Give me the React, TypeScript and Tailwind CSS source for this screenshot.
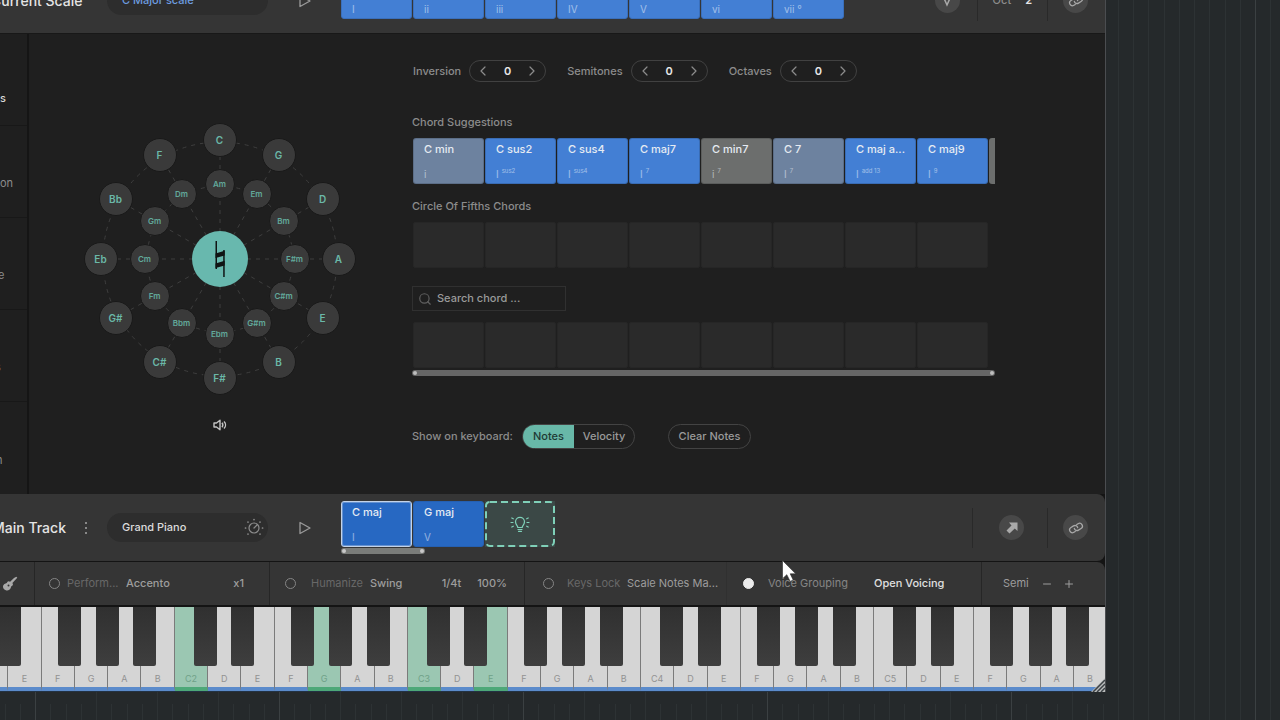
import { ChevronLeft, ChevronRight, Minus, Plus, Search } from "lucide-react";
import type { CSSProperties, FC, ReactNode } from "react";

type Chord = {
	name: string;
	degree: string;
	sup?: string;
	tone: string;
};

const BLUE = "bg-[#437fd4]";
const SLATE = "bg-[#6d829f]";
const GREY = "bg-[#6c6e6d]";

const SUGGESTIONS: Chord[] = [
	{ name: "C min", degree: "i", tone: SLATE },
	{ name: "C sus2", degree: "I", sup: "sus2", tone: BLUE },
	{ name: "C sus4", degree: "I", sup: "sus4", tone: BLUE },
	{ name: "C maj7", degree: "I", sup: "7", tone: BLUE },
	{ name: "C min7", degree: "i", sup: "7", tone: GREY },
	{ name: "C 7", degree: "I", sup: "7", tone: SLATE },
	{ name: "C maj a...", degree: "I", sup: "add 13", tone: BLUE },
	{ name: "C maj9", degree: "I", sup: "9", tone: BLUE },
];

const SCALE_DEGREES = ["I", "ii", "iii", "IV", "V", "vi", "vii °"];
const MAJORS = ["C", "G", "D", "A", "E", "B", "F#", "C#", "G#", "Eb", "Bb", "F"];
const MINORS = ["Am", "Em", "Bm", "F#m", "C#m", "G#m", "Ebm", "Bbm", "Fm", "Cm", "Gm", "Dm"];

const CENTER = 136;
const OUTER = 119;
const INNER = 75;

const polar = (index: number, radius: number) => {
	const angle = (index * Math.PI) / 6;
	return {
		x: Math.floor(CENTER + Math.sin(angle) * radius),
		y: Math.floor(CENTER - Math.cos(angle) * radius),
	};
};

const place = (index: number, radius: number): CSSProperties => {
	const { x, y } = polar(index, radius);
	return { left: x, top: y };
};

const CircleOfFifths: FC = () => (
	<div className="relative h-[272px] w-[272px]">
		<svg className="h-full w-full" viewBox="0 0 272 272" fill="none" stroke="#3e3e3e" strokeDasharray="4 5">
			<circle cx={CENTER} cy={CENTER} r={OUTER - 2} />
			<circle cx={CENTER} cy={CENTER} r={INNER - 2} />
			{MAJORS.map((name, i) => {
				const end = polar(i, OUTER);
				return <path key={name} d={`M${CENTER} ${CENTER}L${end.x} ${end.y}`} />;
			})}
		</svg>
		{MAJORS.map((name, i) => (
			<button
				key={name}
				type="button"
				style={place(i, OUTER)}
				className="absolute h-[34px] w-[34px] -translate-x-1/2 -translate-y-1/2 rounded-full border border-[#191919] bg-[#3a3a3a] text-[10px] font-semibold text-[#6bb8a8]"
			>
				{name}
			</button>
		))}
		{MINORS.map((name, i) => (
			<button
				key={name}
				type="button"
				style={place(i, INNER)}
				className="absolute h-[30px] w-[30px] -translate-x-1/2 -translate-y-1/2 rounded-full border border-[#191919] bg-[#3a3a3a] text-[8px] font-semibold text-[#62a99b]"
			>
				{name}
			</button>
		))}
		<button
			type="button"
			aria-label="Natural"
			className="absolute top-1/2 left-1/2 flex h-[56px] w-[56px] -translate-x-1/2 -translate-y-1/2 items-center justify-center rounded-full bg-[#68b8ae]"
		>
			<svg width="12" height="38" viewBox="0 0 12 38" fill="#101414">
				<path d="M1.500 1h1.500v28H1.500zM9.200 10h1.500v27H9.200z" />
				<path d="M1.500 13.500l9.200-2.700v4.600l-9.200 2.700zM1.500 23.500l9.200-2.700v4.600l-9.200 2.700z" />
			</svg>
		</button>
	</div>
);

const Stepper: FC<{ label: string }> = ({ label }) => (
	<div className="flex items-center gap-2">
		<span className="text-[11px] font-medium text-[#8c8c8c]">{label}</span>
		<div className="flex h-[22px] w-[77px] items-center justify-between rounded-full border border-[#414141] px-[5px] text-[#8c8c8c]">
			<button type="button" aria-label={`${label} down`}>
				<ChevronLeft className="h-[16px] w-[16px]" strokeWidth={1.8} />
			</button>
			<span className="text-[11px] font-semibold text-[#e8e8e8]">0</span>
			<button type="button" aria-label={`${label} up`}>
				<ChevronRight className="h-[16px] w-[16px]" strokeWidth={1.8} />
			</button>
		</div>
	</div>
);

const ChordTile: FC<{ chord: Chord; className?: string }> = ({ chord, className = "" }) => (
	<button
		type="button"
		className={`flex h-[46px] w-[71px] shrink-0 flex-col justify-between rounded-[3px] border px-[10px] pt-[3px] pb-[2px] text-left whitespace-nowrap ${chord.tone} ${className}`}
	>
		<span className="text-[11px] leading-[15px] font-medium text-[#e6ebf2]">{chord.name}</span>
		<span className="flex gap-[3px] text-[10px] leading-[14px] text-white/50">
			{chord.degree}
			{chord.sup ? <span className="text-[6px] leading-[8px]">{chord.sup}</span> : null}
		</span>
	</button>
);

const EmptySlots: FC = () => (
	<div className="flex h-[46px] gap-px pl-px">
		{Array.from({ length: 8 }, (_, i) => (
			<div key={i} className="w-[71px] shrink-0 rounded-[2px] border border-[#262626] bg-[#2a2a2a]" />
		))}
	</div>
);

const PlayButton: FC = () => (
	<button type="button" aria-label="Play" className="ml-[31px]">
		<svg width="12" height="14" viewBox="0 0 12 14" fill="none" stroke="#9a9a9a" strokeLinejoin="round">
			<path d="M1 1.500v11L11 7z" strokeWidth="1.300" />
		</svg>
	</button>
);

const RoundButton: FC<{ label: string; children: ReactNode }> = ({ label, children }) => (
	<button
		type="button"
		aria-label={label}
		className="flex h-[25px] w-[25px] items-center justify-center rounded-full bg-[#484848] text-[#a9a9a9]"
	>
		{children}
	</button>
);

const Divider: FC = () => <div className="h-[40px] w-px bg-[#292929]" />;

const ChainIcon: FC = () => (
	<svg width="16" height="16" viewBox="0 0 16 16" fill="none" stroke="currentColor" strokeWidth="1.300" strokeLinecap="round">
		<g transform="rotate(-32 8 8)">
			<path d="M5.500 10.500H4a2.800 2.800 0 0 1 0-5.600h3a2.800 2.800 0 0 1 2.600 3.700" />
			<path d="M10.500 5.500H12a2.800 2.800 0 0 1 0 5.600H9a2.800 2.800 0 0 1-2.600-3.700" />
		</g>
	</svg>
);

const ScaleBar: FC = () => (
	<header className="flex h-[34px] items-end overflow-hidden border-b border-[#181818] bg-[#353535]">
		<div className="flex h-[65px] flex-1 shrink-0 items-center">
			<span className="-ml-[9px] w-[116px] text-[14px] font-medium whitespace-nowrap text-[#e4e4e4]">Current Scale</span>
			<button type="button" className="h-[29px] w-[161px] rounded-full bg-[#2d2d2d] pl-[15px] text-left text-[11px] font-medium text-[#6d9de0]">
				C Major scale
			</button>
			<PlayButton />
			<div className="mb-[9px] ml-[30px] flex gap-px">
				{SCALE_DEGREES.map((degree) => (
					<ChordTile key={degree} chord={{ name: "", degree, tone: BLUE }} className="border-[#3a6fbb]" />
				))}
			</div>
			<div className="ml-auto flex items-center pr-[17px]">
				<RoundButton label="Direction">
					<svg width="10" height="12" viewBox="0 0 10 12" fill="none" stroke="currentColor" strokeWidth="1.500">
						<path d="M1 1l4 9 4-9" />
					</svg>
				</RoundButton>
				<div className="ml-[17px]">
					<Divider />
				</div>
				<span className="ml-[15px] text-[11px] font-medium text-[#8c8c8c]">Oct</span>
				<span className="mr-[15px] ml-[14px] text-[11px] font-semibold text-[#e4e4e4]">2</span>
				<Divider />
				<div className="ml-[15px]">
					<RoundButton label="Link scale">
						<ChainIcon />
					</RoundButton>
				</div>
			</div>
		</div>
	</header>
);

const SIDEBAR = [
	{ label: "s", className: "pb-[19px] text-[#d8d8d8] font-medium" },
	{ label: "on", className: "pb-[26px] text-[#8c8c8c]" },
	{ label: "e", className: "pb-[26px] text-[#8c8c8c] -ml-[2px]" },
	{ label: "s", className: "pb-[26px] text-[#8c8c8c] -ml-[5px]" },
	{ label: "n", className: "pb-[26px] text-[#8c8c8c] -ml-[4px]" },
];

const Sidebar: FC = () => (
	<nav className="w-[29px] shrink-0 overflow-hidden border-r-2 border-[#151515]">
		{SIDEBAR.map((item, i) => (
			<button
				key={i}
				type="button"
				className="flex h-[92px] w-full items-end border-b border-[#181818] text-[11px] leading-[16px] last:border-b-0"
			>
				<span className={item.className}>{item.label}</span>
			</button>
		))}
	</nav>
);

const ChordPanel: FC = () => (
	<section className="min-w-0 flex-1 pt-[26px]">
		<div className="flex gap-[21px] pl-px">
			<Stepper label="Inversion" />
			<Stepper label="Semitones" />
			<Stepper label="Octaves" />
		</div>

		<h2 className="mt-[32px] text-[11px] leading-[16px] font-medium text-[#8c8c8c]">Chord Suggestions</h2>
		<div className="mt-[8px] flex w-[583px] gap-px overflow-hidden pl-px">
			{SUGGESTIONS.map((chord) => (
				<ChordTile key={chord.name} chord={chord} className="border-black/15" />
			))}
			<div className="h-[46px] w-[71px] shrink-0 rounded-[3px] bg-[#6c6e6d]" />
		</div>

		<h2 className="mt-[14px] mb-[8px] text-[11px] leading-[16px] font-medium text-[#8c8c8c]">Circle Of Fifths Chords</h2>
		<EmptySlots />

		<label className="mt-[18px] mb-[11px] flex h-[25px] w-[154px] items-center gap-[5px] border border-[#303030] px-[5px]">
			<Search className="h-[14px] w-[14px] shrink-0 text-[#606060]" />
			<input
				type="text"
				aria-label="Search chord"
				placeholder="Search chord ..."
				className="w-full min-w-0 bg-transparent text-[11px] font-medium outline-none placeholder:text-[#9a9a9a]"
			/>
		</label>
		<EmptySlots />
		<div className="mt-[2px] flex h-[6px] w-[583px] items-center justify-between rounded-full bg-[#666666] px-px">
			<span className="h-[4px] w-[4px] rounded-full bg-[#bdbdbd]" />
			<span className="h-[4px] w-[4px] rounded-full bg-[#bdbdbd]" />
		</div>

		<div className="mt-[48px] flex h-[25px] items-center text-[11px] font-medium">
			<span className="w-[110px] text-[#8c8c8c]">Show on keyboard:</span>
			<div className="flex h-full overflow-hidden rounded-full border border-[#434343] text-[#9a9a9a]">
				<button type="button" className="w-[51px] bg-[#68b8a8] text-[#1f3a35]">
					Notes
				</button>
				<button type="button" className="w-[60px]">
					Velocity
				</button>
			</div>
			<button type="button" className="ml-[33px] h-full w-[83px] rounded-full border border-[#434343] text-[#9a9a9a]">
				Clear Notes
			</button>
		</div>
	</section>
);

const DialIcon: FC = () => (
	<svg width="20" height="20" viewBox="0 0 20 20" fill="none" stroke="#8c8c8c" strokeLinecap="round">
		<circle cx="10" cy="10" r="5" strokeWidth="1.200" />
		<path d="M10 10l3-3" strokeWidth="1.200" />
		<path d="M10 1.500v.1M4 4v.1M16 4v.1M1.500 10h.1M18.500 10h.1M4 16v.1M16 16v.1" strokeWidth="1.700" />
	</svg>
);

const BulbIcon: FC = () => (
	<svg width="20" height="18" viewBox="0 0 20 18" fill="none" stroke="#7fd0b8" strokeWidth="1.200" strokeLinecap="round">
		<path d="M7.800 12.500c0-1.800-2.300-2.600-2.300-5.700a4.500 4.500 0 0 1 9 0c0 3.100-2.300 3.900-2.300 5.700z" />
		<path d="M8 14.500h4M8.500 16.300h3M1 7.500h2M17 7.500h2M1.800 3l1.500.8M18.200 3l-1.500.8M1.800 12l1.500-.8M18.200 12l-1.500-.8" />
	</svg>
);

const TrackBar: FC = () => (
	<div className="flex h-[67px] items-center rounded-r-[8px] bg-[#353535]">
		<span className="-ml-[8px] w-[88px] text-[14px] font-medium whitespace-nowrap text-[#e4e4e4]">Main Track</span>
		<button type="button" aria-label="Track menu" className="flex w-[12px] flex-col items-center gap-[3px]">
			<span className="h-[2px] w-[2px] rounded-full bg-[#a5a5a5]" />
			<span className="h-[2px] w-[2px] rounded-full bg-[#a5a5a5]" />
			<span className="h-[2px] w-[2px] rounded-full bg-[#a5a5a5]" />
		</button>
		<button
			type="button"
			className="ml-[15px] flex h-[29px] w-[161px] items-center justify-between rounded-full bg-[#2d2d2d] pr-[4px] pl-[15px] text-[11px] font-medium text-[#dcdcdc]"
		>
			Grand Piano
			<DialIcon />
		</button>
		<PlayButton />
		<div className="ml-[30px] flex flex-col gap-px">
			<div className="flex gap-px">
				<ChordTile chord={{ name: "C maj", degree: "I", tone: "bg-[#2768c2]" }} className="border-[#c3d3e8] outline outline-[#c3d3e8]/40 -outline-offset-2" />
				<ChordTile chord={{ name: "G maj", degree: "V", tone: "bg-[#2768c2]" }} className="border-[#2560b2]" />
				<button type="button" aria-label="Suggest chord" className="relative flex h-[46px] w-[70px] items-center justify-center bg-[#3b4846]">
					<svg className="absolute inset-0 h-full w-full" viewBox="0 0 70 46" fill="none">
						<rect x="1" y="1" width="68" height="44" rx="4" stroke="#7fd0b8" strokeWidth="2" strokeDasharray="7 4" />
					</svg>
					<BulbIcon />
				</button>
			</div>
			<div className="flex h-[6px] w-[84px] items-center justify-between rounded-full bg-[#7b7d7a] px-px">
				<span className="h-[4px] w-[4px] rounded-full bg-[#c9c9c9]" />
				<span className="h-[4px] w-[4px] rounded-full bg-[#c9c9c9]" />
			</div>
		</div>
		<div className="ml-auto flex items-center pr-[17px]">
			<Divider />
			<div className="mr-[23px] ml-[26px]">
				<RoundButton label="Drag out">
					<svg width="14" height="14" viewBox="0 0 14 14" fill="currentColor">
						<path d="M4 1.500h8.500V10L9.800 7.500 4.500 12.500 1.500 9.500 6.500 4.400z" />
					</svg>
				</RoundButton>
			</div>
			<Divider />
			<div className="ml-[15px]">
				<RoundButton label="Link track">
					<ChainIcon />
				</RoundButton>
			</div>
		</div>
	</div>
);

const Toggle: FC<{ label: string; checked?: boolean; className: string }> = ({ label, checked, className }) => (
	<label className={`flex shrink-0 items-center ${className}`}>
		<input
			type="checkbox"
			defaultChecked={checked}
			className="h-[11px] w-[11px] shrink-0 appearance-none rounded-full border border-[#858585] checked:border-[#ececec] checked:bg-[#ececec]"
		/>
		{label}
	</label>
);

const OptionBar: FC = () => (
	<div className="mt-px flex h-[43px] items-center rounded-tr-[8px] bg-[#353535] text-[11px] whitespace-nowrap text-[#9d9d9d]">
		<div className="flex h-full w-[35px] shrink-0 items-center border-r border-[#262626] pl-[2px]">
			<svg width="16" height="16" viewBox="0 0 16 16" fill="#a9a9a9">
				<path d="M14.300.8l1 1-1.200 1.300-3.700 3.900c1 1.400.6 2.400-.6 2.900-.8.400-.7 1-1.100 2.100-.7 1.900-2.900 3-4.900 2.200-1.300-.5-2.300-1.500-2.700-2.800-.5-1.900.8-3.500 2.500-3.900 1-.3 1.300-.5 1.600-1.300.5-1.200 1.700-1.400 2.900-.5l3.900-3.800z" />
				<circle cx="6.500" cy="9.500" r="1" fill="#353535" />
			</svg>
		</div>
		<div className="flex h-full w-[235px] items-center border-r border-[#262626] pr-[25px] pl-[14px]">
			<Toggle label="Perform..." className="w-[77px] gap-[7px] text-[#686868]" />
			<button type="button" className="font-medium">
				Accento
			</button>
			<span className="ml-auto font-medium">x1</span>
		</div>
		<div className="flex h-full w-[255px] items-center border-r border-[#262626] pr-[17px] pl-[15px]">
			<Toggle label="Humanize" className="w-[85px] gap-[15px] text-[#686868]" />
			<button type="button" className="font-medium">
				Swing
			</button>
			<span className="mr-[16px] ml-auto font-medium">1/4t</span>
			<span className="font-medium">100%</span>
		</div>
		<div className="flex h-full w-[202px] items-center border-r border-[#303030] pl-[18px]">
			<Toggle label="Keys Lock" className="w-[84px] gap-[13px] text-[#686868]" />
			<button type="button">Scale Notes Ma...</button>
		</div>
		<div className="flex h-full w-[255px] items-center border-r border-[#262626] pl-[16px]">
			<Toggle label="Voice Grouping" checked className="w-[131px] gap-[14px] text-[#858585]" />
			<button type="button" className="font-medium text-[#e0e0e0]">
				Open Voicing
			</button>
		</div>
		<div className="flex h-full items-center pl-[21px]">
			<span className="w-[38px]">Semi</span>
			<button type="button" aria-label="Semitone down" className="mr-[10px]">
				<Minus className="h-[12px] w-[12px]" />
			</button>
			<button type="button" aria-label="Semitone up">
				<Plus className="h-[12px] w-[12px]" />
			</button>
		</div>
	</div>
);

// Distance from a white key's right edge to the left edge of the black key over it
const BLACK_OFFSET: Record<string, string> = {
	C: "-ml-[13px]",
	D: "-ml-[9px]",
	F: "-ml-[16px]",
	G: "-ml-[11px]",
	A: "-ml-[7px]",
};

const KEYS = Array.from({ length: 34 }, (_, i) => {
	const step = i + 1;
	return { note: "CDEFGAB"[step % 7], octave: Math.floor(step / 7) + 1 };
});

const PRESSED = ["C2", "G2", "C3", "E3"];

const Keyboard: FC = () => (
	<div className="mt-[2px] flex h-[85px] overflow-hidden">
		<div className="-mr-[2px] -ml-[25px] flex flex-1 border-b border-[#233243]">
			{KEYS.map(({ note, octave }) => {
				const id = `${note}${octave}`;
				const pressed = PRESSED.includes(id);
				return (
					<button
						key={id}
						type="button"
						aria-label={id}
						className={`relative flex flex-1 items-end justify-center border-r border-b-4 border-r-[#7b7b7b] pb-px text-[9px] leading-[14px] ${
							pressed ? "border-b-[#4da878] bg-[#9bc7b2] text-[#6fa188]" : "border-b-[#5b8bcb] bg-[#d5d5d5] text-[#929292]"
						}`}
					>
						{note === "C" ? id : note}
						{note in BLACK_OFFSET ? (
							<span
								className={`absolute top-0 left-full z-10 h-[59px] w-[23px] rounded-b-[2px] bg-linear-to-b from-[#303030] to-[#3e3e3e] ${BLACK_OFFSET[note]}`}
							/>
						) : null}
					</button>
				);
			})}
		</div>
	</div>
);

const TimelineGrid: FC = () => (
	<svg className="absolute inset-0 h-full w-full" stroke="#2d3234">
		{Array.from({ length: 130 }, (_, i) => {
			const x = Math.round(35 + ((i - 2) * 244) / 16) + 0.5;
			const bar = (i - 2) % 16 === 0;
			const top = (i - 2) % 4 === 0 || x > 1105 ? 0 : 704;
			return <line key={i} x1={x} x2={x} y1={top} y2="100%" stroke={bar ? "#3b4042" : undefined} />;
		})}
	</svg>
);

export default function App() {
	return (
		<div className="relative min-h-screen overflow-hidden bg-[#25292b] pb-[28px] font-['Inter',sans-serif]">
			<TimelineGrid />
			<main className="relative mr-[174px] overflow-hidden border-r border-[#4b4d50] bg-[#141414]">
				<ScaleBar />
				<div className="flex bg-[#1f1f1f]">
					<Sidebar />
					<section className="mr-[2px] flex w-[381px] shrink-0 flex-col items-center pt-[89px]">
						<CircleOfFifths />
						<button type="button" aria-label="Toggle sound" className="mt-[23px]">
							<svg width="14" height="14" viewBox="0 0 14 14" fill="none" stroke="#c4c4c4" strokeWidth="1.400" strokeLinejoin="round">
								<path d="M1 5h2.500L7 2.300v9.400L3.500 9H1z" />
								<path d="M9 4.800c1 1.300 1 3.100 0 4.400M11 3.500c2 2 2 5 0 7" />
							</svg>
						</button>
					</section>
					<ChordPanel />
				</div>
				<TrackBar />
				<OptionBar />
				<Keyboard />
				<svg className="absolute right-0 bottom-0 z-20" width="14" height="14" viewBox="0 0 14 14" fill="none">
					<path d="M14 0v14H0z" fill="#b9bbbb" />
					<path d="M2 14L14 2M6 14l8-8M10 14l4-4" stroke="#3c4145" strokeWidth="1.500" />
				</svg>
			</main>
			<svg className="absolute top-[559px] left-[781px] z-30" width="16" height="24" viewBox="0 0 16 24">
				<path d="M1.500 1.500v18.200l4.300-4 3.400 6.700 3-1.400-3-6.200h5.500z" fill="#ffffff" stroke="#2b2b2b" strokeWidth=".6" />
			</svg>
		</div>
	);
}
